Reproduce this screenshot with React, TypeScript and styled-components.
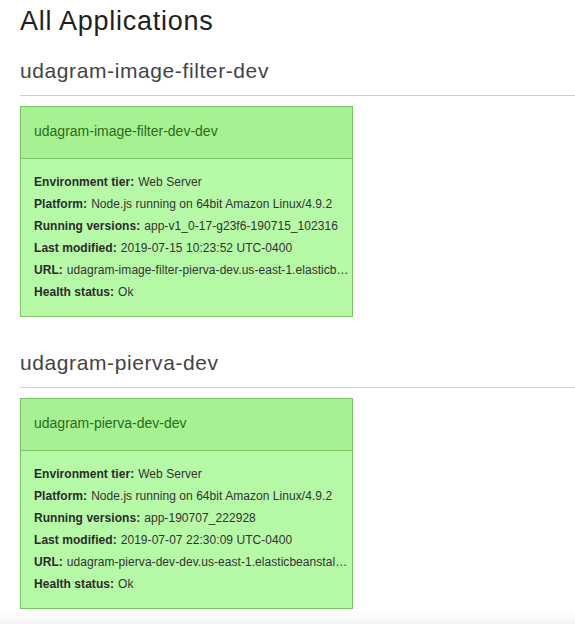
import React from "react";
import styled, { createGlobalStyle } from "styled-components";

const Global = createGlobalStyle`
  html, body { margin: 0; padding: 0; background: #fff; }
  body { font-family: "Liberation Sans", Arial, Helvetica, sans-serif; color: #333; }
`;

const Page = styled.div`
  width: 575px;
  height: 624px;
  overflow: hidden;
  display: flex;
  flex-direction: column;
`;

const Content = styled.div`
  padding-left: 20px;
  display: flex;
  flex-direction: column;
`;

const Title = styled.h1`
  margin: 6px 0 0;
  font-size: 27px;
  line-height: 30px;
  letter-spacing: 0.75px;
  font-weight: normal;
  color: #1f1f1f;
`;

const SectionTitle = styled.h2<{ $gap: number }>`
  margin: ${(p) => p.$gap}px 0 0;
  padding-bottom: 12px;
  font-size: 21px;
  line-height: 24px;
  letter-spacing: 0.6px;
  font-weight: normal;
  color: #444;
  border-bottom: 1px solid #cfcfcf;
`;

const Card = styled.div`
  margin-top: 10px;
  width: 331px;
  border: 1px solid #7dc46b;
  background: #b6f9a7;
`;

const CardHeader = styled.div`
  background: #a6f192;
  border-bottom: 1px solid #7dc46b;
  padding: 14px 14px 17px 13px;
  font-size: 14px;
  line-height: 20px;
  color: #2d6a1c;
`;

const CardBody = styled.div`
  padding: 12px 2px 13px 13px;
  display: flex;
  flex-direction: column;
`;

const Row = styled.div`
  font-size: 12px;
  line-height: 22px;
  letter-spacing: 0.05px;
  white-space: nowrap;
  overflow: hidden;
  text-overflow: ellipsis;
  color: #333;
`;

const Label = styled.b`
  font-weight: bold;
  margin-right: 4px;
  color: #2b2b2b;
`;

const Footer = styled.div`
  margin-top: 3px;
  flex: 1;
  background: linear-gradient(#ffffff, #f3f3f3);
`;

type Env = {
  app: string;
  name: string;
  tier: string;
  platform: string;
  version: string;
  modified: string;
  url: string;
  health: string;
};

const envs: Env[] = [
  {
    app: "udagram-image-filter-dev",
    name: "udagram-image-filter-dev-dev",
    tier: "Web Server",
    platform: "Node.js running on 64bit Amazon Linux/4.9.2",
    version: "app-v1_0-17-g23f6-190715_102316",
    modified: "2019-07-15 10:23:52 UTC-0400",
    url: "udagram-image-filter-pierva-dev.us-east-1.elasticbeanstalk.com",
    health: "Ok",
  },
  {
    app: "udagram-pierva-dev",
    name: "udagram-pierva-dev-dev",
    tier: "Web Server",
    platform: "Node.js running on 64bit Amazon Linux/4.9.2",
    version: "app-190707_222928",
    modified: "2019-07-07 22:30:09 UTC-0400",
    url: "udagram-pierva-dev-dev.us-east-1.elasticbeanstalk.com",
    health: "Ok",
  },
];

export default function App() {
  return (
    <Page>
      <Global />
      <Content>
        <Title>All Applications</Title>
        {envs.map((e, i) => (
          <React.Fragment key={e.app}>
            <SectionTitle $gap={i === 0 ? 23 : 34}>{e.app}</SectionTitle>
            <Card>
              <CardHeader>{e.name}</CardHeader>
              <CardBody>
                <Row><Label>Environment tier:</Label>{e.tier}</Row>
                <Row><Label>Platform:</Label>{e.platform}</Row>
                <Row><Label>Running versions:</Label>{e.version}</Row>
                <Row><Label>Last modified:</Label>{e.modified}</Row>
                <Row><Label>URL:</Label>{e.url}</Row>
                <Row><Label>Health status:</Label>{e.health}</Row>
              </CardBody>
            </Card>
          </React.Fragment>
        ))}
      </Content>
      <Footer />
    </Page>
  );
}
